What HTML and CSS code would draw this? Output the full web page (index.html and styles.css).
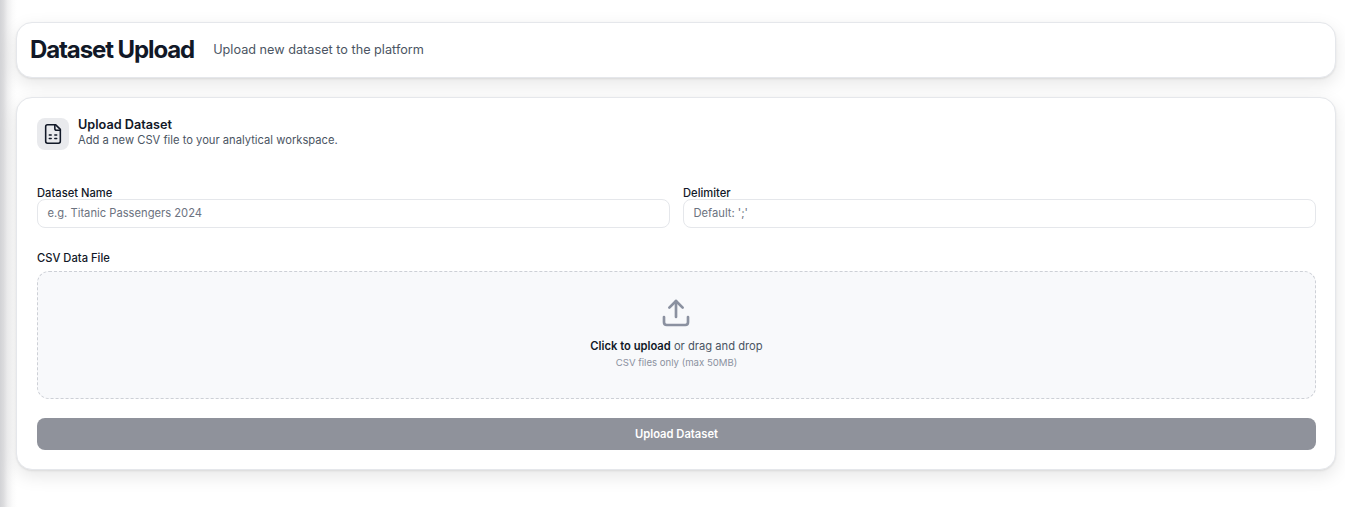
FILE: index.html
```html
<!DOCTYPE html>
<html lang="en">
<head>
    <meta charset="UTF-8">
    <meta name="viewport" content="width=device-width, initial-scale=1.0">
    <title>Dataset Upload</title>
    <link rel="stylesheet" href="styles.css">
</head>
<body>
    <div class="side_edge"></div>
    <div class="main">
        <div class="header card">
            <h1>Dataset Upload</h1>
            <p>Upload new dataset to the platform</p>
        </div>
        <div class="panel card">
            <div class="panel_head">
                <div class="panel_icon">
                    <svg width="22" height="22" viewBox="0 0 24 24" fill="none" stroke="#111827" stroke-width="1.7" stroke-linecap="round" stroke-linejoin="round">
                        <path d="M15 2H6a2 2 0 0 0-2 2v16a2 2 0 0 0 2 2h12a2 2 0 0 0 2-2V7Z"/>
                        <path d="M14 2v4a2 2 0 0 0 2 2h4"/>
                        <path d="M8 13h2"/>
                        <path d="M14 13h2"/>
                        <path d="M8 17h2"/>
                        <path d="M14 17h2"/>
                    </svg>
                </div>
                <div class="panel_title">
                    <h2>Upload Dataset</h2>
                    <p>Add a new CSV file to your analytical workspace.</p>
                </div>
            </div>
            <div class="fields">
                <div class="field">
                    <label>Dataset Name</label>
                    <div class="input">e.g. Titanic Passengers 2024</div>
                </div>
                <div class="field">
                    <label>Delimiter</label>
                    <div class="input">Default: ';'</div>
                </div>
            </div>
            <div class="file_field">
                <label>CSV Data File</label>
                <div class="dropzone">
                    <svg class="drop_icon" width="32" height="32" viewBox="0 0 24 24" fill="none" stroke="#8b91a0" stroke-width="2" stroke-linecap="round" stroke-linejoin="round">
                        <path d="M21 15v4a2 2 0 0 1-2 2H5a2 2 0 0 1-2-2v-4"/>
                        <path d="M17 8l-5-5-5 5"/>
                        <path d="M12 3v12"/>
                    </svg>
                    <p class="drop_text"><b>Click to upload</b> or drag and drop</p>
                    <p class="drop_hint">CSV files only (max 50MB)</p>
                </div>
            </div>
            <div class="submit">Upload Dataset</div>
        </div>
    </div>
</body>
</html>
```

FILE: styles.css
```css
* {
    padding: 0;
    margin: 0;
    box-sizing: border-box;
}
body {
    background-color: #fff;
    font-family: Inter, "Liberation Sans", sans-serif;
    color: #111827;
    height: 507px;
    overflow: hidden;
}
.side_edge {
    position: absolute;
    left: 0;
    top: 0;
    bottom: 0;
    width: 17px;
    background: linear-gradient(to right, #d2d3d6, #dcdcde 20%, #efeff0 45%, #fbfbfb 75%, #fff);
}
.main {
    position: relative;
    padding: 22px 9px 0 16px;
}
.card {
    background-color: #fff;
    border: 1px solid #e5e7eb;
    box-shadow: 0 1px 2px rgba(0,0,0,0.08), 0 6px 18px rgba(0,0,0,0.1);
}
.header {
    display: flex;
    align-items: center;
    gap: 19px;
    height: 56px;
    padding: 0 13px;
    border-radius: 16px;
}
.header h1 {
    font-size: 24px;
    line-height: 32px;
    font-weight: 700;
    letter-spacing: -1.1px;
}
.header p {
    margin-top: -2px;
    font-size: 12.7px;
    color: #4b5563;
}
.panel {
    margin-top: 19px;
    height: 373px;
    padding: 20px 19px 20px 20px;
    border-radius: 16px;
}
.panel_head {
    display: flex;
    align-items: center;
    gap: 9px;
}
.panel_icon {
    display: flex;
    align-items: center;
    justify-content: center;
    width: 32px;
    height: 32px;
    border-radius: 8px;
    background-color: #e9eaed;
}
.panel_title {
    margin-top: -4px;
}
.panel_head h2 {
    margin-bottom: 1px;
    font-size: 12.7px;
    line-height: 15px;
    font-weight: 600;
}
.panel_head p {
    font-size: 11.2px;
    line-height: 15px;
    color: #4b5563;
}
.fields {
    display: grid;
    grid-template-columns: 1fr 1fr;
    gap: 13px;
    margin-top: 37px;
}
label {
    display: block;
    font-size: 11.2px;
    line-height: 12px;
    font-weight: 500;
}
.input {
    height: 29px;
    padding: 0 9.5px;
    border: 1px solid #e5e7eb;
    border-radius: 8px;
    font-size: 11.2px;
    line-height: 27px;
    color: #6b7280;
}
.file_field {
    margin-top: 24px;
}
.dropzone {
    display: flex;
    flex-direction: column;
    align-items: center;
    height: 128px;
    margin-top: 7px;
    padding-top: 25px;
    background-color: #f8f9fb;
    border: 1px dashed #cdd0d6;
    border-radius: 12px;
}
.drop_icon {
    margin-right: 1px;
}
.drop_text {
    margin-top: 10px;
    font-size: 11.2px;
    line-height: 14px;
    color: #4b5563;
}
.drop_text b {
    font-weight: 600;
    color: #111827;
}
.drop_hint {
    margin-top: 4px;
    font-size: 9.6px;
    line-height: 12px;
    color: #8b91a0;
}
.submit {
    height: 32px;
    margin-top: 19px;
    background-color: #8f929b;
    border-radius: 8px;
    color: #fff;
    font-size: 11.2px;
    font-weight: 600;
    line-height: 32px;
    text-align: center;
}
```
